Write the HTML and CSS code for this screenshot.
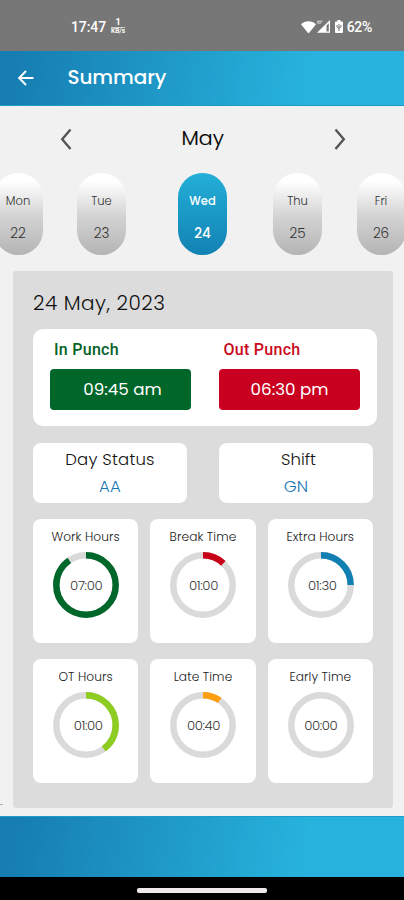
FILE: index.html
```html
<!DOCTYPE html>
<html lang="en">
<head>
<meta charset="utf-8">
<title>Summary</title>
<link rel="stylesheet" href="styles.css">
</head>
<body>
<div class="phone">
  <div class="status-bar">
    <span class="clock">17:47</span>
    <span class="speed"><span class="speed-value">1</span><span class="speed-unit">KB/s</span></span>
    <div class="indicators">
      <svg class="wifi" viewBox="0 0 15 12" width="15" height="12"><path d="M0 3.2C4-.7 11-.7 15 3.2L8.4 11.4Q7.5 12.4 6.6 11.4Z" fill="#fff"/></svg>
      <svg class="signal" viewBox="0 0 14 13" width="14" height="13"><path d="M0 12.8 13 0v12.8Z" fill="#fff"/><path d="M9.5 5.5 11.8 3.2v8.4H9.5Z" fill="#777"/><path d="M0 1.2h5.5M0 3h4" stroke="#ddd" stroke-width="1"/></svg>
      <svg class="battery" viewBox="0 0 8 13" width="8" height="13"><path d="M2.5 0h3v1.5H7q1 0 1 1V12q0 1-1 1H1q-1 0-1-1V2.5q0-1 1-1h1.5Z" fill="#fff"/><path d="M2 5v2l2 1.3L6 7V5M4 4v7" fill="none" stroke="#777" stroke-width="1"/></svg>
      <span class="percent">62%</span>
    </div>
  </div>
  <header class="app-bar">
    <svg class="back" viewBox="0 0 16 16" width="16" height="16"><path d="M15.5 8H1.5M8 1 1.2 8 8 15" fill="none" stroke="#fff" stroke-width="2"/></svg>
    <h1 class="title">Summary</h1>
  </header>
  <main class="content">
    <div class="month">
      <svg viewBox="0 0 12 22" width="12" height="22"><path d="M10.5 1.5 2.2 11.2 10.5 21" fill="none" stroke="#555" stroke-width="2.4"/></svg>
      <span class="month-name">May</span>
      <svg viewBox="0 0 12 22" width="12" height="22"><path d="M1.5 1.5 9.8 11.2 1.5 21" fill="none" stroke="#555" stroke-width="2.4"/></svg>
    </div>
    <div class="days">
      <div class="day"><span>Mon</span><span class="num">22</span></div>
      <div class="day"><span>Tue</span><span class="num">23</span></div>
      <div class="day selected"><span>Wed</span><span class="num">24</span></div>
      <div class="day"><span>Thu</span><span class="num">25</span></div>
      <div class="day"><span>Fri</span><span class="num">26</span></div>
    </div>
    <div class="panel-row">
      <span class="edge-mark"></span>
      <section class="panel">
        <h2 class="date">24 May, 2023</h2>
        <div class="punches">
          <div class="punch in"><span class="punch-label">In Punch</span><div class="punch-time">09:45 am</div></div>
          <div class="punch out"><span class="punch-label">Out Punch</span><div class="punch-time">06:30 pm</div></div>
        </div>
        <div class="facts">
          <div class="fact"><span class="fact-name">Day Status</span><span class="fact-value">AA</span></div>
          <div class="fact shift"><span class="fact-name">Shift</span><span class="fact-value">GN</span></div>
        </div>
        <div class="metrics">
          <div class="metric work"><span class="metric-name">Work Hours</span><div class="ring"><svg viewBox="0 0 66 66"><circle class="track" cx="33" cy="33" r="29.7"/><circle class="arc" cx="33" cy="33" r="29.7" pathLength="100" stroke-dasharray="90.5 100"/></svg><span>07:00</span></div></div>
          <div class="metric break"><span class="metric-name">Break Time</span><div class="ring"><svg viewBox="0 0 66 66"><circle class="track" cx="33" cy="33" r="29.7"/><circle class="arc" cx="33" cy="33" r="29.7" pathLength="100" stroke-dasharray="12 100"/></svg><span>01:00</span></div></div>
          <div class="metric extra"><span class="metric-name">Extra Hours</span><div class="ring"><svg viewBox="0 0 66 66"><circle class="track" cx="33" cy="33" r="29.7"/><circle class="arc" cx="33" cy="33" r="29.7" pathLength="100" stroke-dasharray="25 100"/></svg><span>01:30</span></div></div>
          <div class="metric ot"><span class="metric-name">OT Hours</span><div class="ring"><svg viewBox="0 0 66 66"><circle class="track" cx="33" cy="33" r="29.7"/><circle class="arc" cx="33" cy="33" r="29.7" pathLength="100" stroke-dasharray="39.8 100"/></svg><span>01:00</span></div></div>
          <div class="metric late"><span class="metric-name">Late Time</span><div class="ring"><svg viewBox="0 0 66 66"><circle class="track" cx="33" cy="33" r="29.7"/><circle class="arc" cx="33" cy="33" r="29.7" pathLength="100" stroke-dasharray="9.5 100"/></svg><span>00:40</span></div></div>
          <div class="metric early"><span class="metric-name">Early Time</span><div class="ring"><svg viewBox="0 0 66 66"><circle class="track" cx="33" cy="33" r="29.7"/></svg><span>00:00</span></div></div>
        </div>
      </section>
    </div>
  </main>
  <footer class="bottom-bar"></footer>
  <div class="nav-bar"><span class="home"></span></div>
</div>
</body>
</html>
```
FILE: styles.css
```css
* { box-sizing: border-box; }
body { margin: 0; font-family: Poppins, Inter, sans-serif; }
svg { display: block; flex: none; }
.phone { width: 404px; height: 900px; overflow: hidden; display: flex; flex-direction: column; background: #f1f1f1; }
.status-bar { height: 51px; flex: none; background: #777; color: #fff; display: flex; align-items: center; padding: 2px 32px 0 71px; font-family: Roboto, sans-serif; }
.clock { font-size: 14px; font-weight: 500; letter-spacing: -.1px; }
.speed { display: flex; flex-direction: column; align-items: center; margin-left: 5px; line-height: 1; font-weight: 700; }
.speed-value { font-size: 9px; height: 9px; }
.speed-unit { font-size: 6.5px; border-top: 1px solid #ccc; }
.indicators { margin-left: auto; display: flex; align-items: center; }
.wifi { margin-right: -1px; }
.signal { margin-left: 2px; }
.battery { margin-left: 4px; }
.percent { margin-left: 4px; font-size: 14px; font-weight: 500; letter-spacing: -.3px; }
.app-bar { height: 55px; flex: none; display: flex; align-items: center; padding-left: 18px; border-bottom: 1px solid #1f9bc8; background: linear-gradient(100deg, #167eb2 5%, #27b3dd 76%); }
.title { margin: -3px 0 0 33.5px; color: #fff; font-size: 20px; font-weight: 500; letter-spacing: -.1px; line-height: 28px; }
.content { height: 710px; flex: none; }
.month { display: flex; align-items: center; justify-content: space-between; padding: 0 58.5px 0 60px; height: 66.5px; }
.month-name { font-size: 20.5px; font-weight: 300; line-height: 28px; margin-top: -3px; color: #000; -webkit-text-stroke: .2px #000; }
.days { display: flex; margin-left: -6.5px; width: 430px; }
.day { width: 49px; height: 82.5px; flex: none; border-radius: 25px; background: linear-gradient(#fff 10%, #d4d4d4 52%, #b4b4b4); color: #333; font-size: 11.5px; font-weight: 300; display: flex; flex-direction: column; align-items: center; line-height: 16px; padding-top: 20px; }
.num { font-size: 13.5px; margin-top: 17px; }
.day:nth-child(2) { margin-left: 34.5px; }
.selected { margin-left: 52px; color: #fff; font-weight: 500; background: linear-gradient(#23afd8, #1282b3); }
.day:nth-child(4) { margin-left: 46px; }
.day:nth-child(5) { margin-left: 34.5px; }
.panel-row { display: flex; align-items: flex-end; margin-top: 16px; }
.edge-mark { width: 3px; height: 1px; background: #aaa; margin: 0 10px 3px 0; }
.panel { width: 380px; height: 537px; border-radius: 3px; background: #dcdcdc; padding: 17.5px 16px 0 20px; }
.date { margin: 0; font-size: 20px; font-weight: 300; line-height: 29px; letter-spacing: .52px; color: #111; }
.punches { margin-top: 11.5px; height: 97px; border-radius: 10px; background: #fff; padding: 11px 17px 11px 16.5px; display: flex; justify-content: space-between; }
.punch { width: 141px; }
.punch-label { display: block; padding-left: 4.5px; font: 500 16px/20px Roboto, sans-serif; letter-spacing: .28px; }
.punch-time { margin-top: 9px; height: 41px; border-radius: 4px; color: #fff; font-size: 16.7px; font-weight: 400; line-height: 41px; text-align: center; padding-left: 5px; }
.in { color: #056128; }
.in .punch-time { background: #006629; }
.out { color: #c90b1c; }
.out .punch-time { background: #c90020; padding-left: 0; }
.facts { margin: 16.5px 4px 0 0; display: flex; justify-content: space-between; }
.fact { width: 154px; height: 60px; border-radius: 8px; background: #fff; display: flex; flex-direction: column; align-items: center; padding-top: 5px; font-size: 16.5px; font-weight: 300; color: #111; }
.fact-name { line-height: 24px; letter-spacing: .2px; }
.fact-value { line-height: 24px; margin-top: 3px; color: #1675b5; letter-spacing: .2px; }
.shift .fact-name { padding-left: 5px; letter-spacing: 0; }
.metrics { margin: 16px 4px 0 0; display: grid; grid-template-columns: repeat(3, 105.33px); justify-content: space-between; row-gap: 16.5px; }
.metric { height: 124px; border-radius: 8px; background: #fff; display: flex; flex-direction: column; align-items: center; padding-top: 8px; }
.metric-name { font-size: 12.2px; line-height: 20px; font-weight: 300; color: #222; letter-spacing: .1px; white-space: nowrap; }
.ring { width: 66px; height: 66px; margin: 5px 0 0 1px; display: grid; place-items: center; font-size: 13.3px; font-weight: 300; color: #333; letter-spacing: -.4px; }
.ring > * { grid-area: 1 / 1; }
.ring span { padding-top: 2px; }
.ring svg { width: 66px; height: 66px; transform: rotate(-90deg); }
.ring circle { fill: none; stroke-width: 6.5; }
.ring .track { stroke: #dadada; }
.work .arc { stroke: #00672a; }
.break .arc { stroke: #c80018; }
.extra .arc { stroke: #127fb2; }
.ot .arc { stroke: #8dcc20; }
.late .arc { stroke: #ff9f10; }
.ot .ring span { padding-left: 4px; }
.extra .ring span { padding-left: 3px; }
.bottom-bar { height: 61px; flex: none; border-top: 1px solid #1f9bc8; background: linear-gradient(100deg, #167eb2 5%, #27b3dd 76%); }
.nav-bar { height: 23px; flex: none; background: #000; display: flex; justify-content: center; align-items: center; }
.home { width: 130px; height: 5px; border-radius: 2px; background: #eee9ed; margin-top: 3px; }
```
